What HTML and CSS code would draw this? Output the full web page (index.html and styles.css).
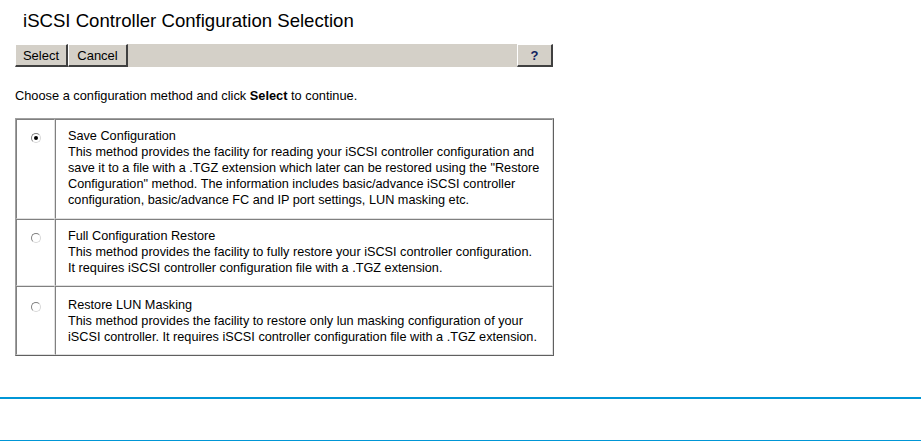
FILE: index.html
```html
<!DOCTYPE html>
<html>
<head>
<meta charset="utf-8">
<link rel="stylesheet" href="styles.css">
</head>
<body>
<div class="page">
  <h1 class="title">iSCSI Controller Configuration Selection</h1>
  <div class="toolbar">
    <span class="btn">Select</span>
    <span class="btn">Cancel</span>
    <span class="spacer"></span>
    <span class="btn help">?</span>
  </div>
  <p class="intro">Choose a configuration method and click <b>Select</b> to continue.</p>
  <table class="options">
    <tr class="row1">
      <td class="sel"><span class="radio checked"></span></td>
      <td class="desc">Save Configuration<br>This method provides the facility for reading your iSCSI controller configuration and save it to a file with a .TGZ extension which later can be restored using the "Restore Configuration" method. The information includes basic/advance iSCSI controller configuration, basic/advance FC and IP port settings, LUN masking etc.</td>
    </tr>
    <tr class="row2">
      <td class="sel"><span class="radio"></span></td>
      <td class="desc">Full Configuration Restore<br>This method provides the facility to fully restore your iSCSI controller configuration.<br>It requires iSCSI controller configuration file with a .TGZ extension.</td>
    </tr>
    <tr class="row3">
      <td class="sel"><span class="radio"></span></td>
      <td class="desc">Restore LUN Masking<br>This method provides the facility to restore only lun masking configuration of your iSCSI controller. It requires iSCSI controller configuration file with a .TGZ extension.</td>
    </tr>
  </table>
</div>
<div class="rule rule1"></div>
<div class="rule rule2"></div>
</body>
</html>
```
FILE: styles.css
```css
html, body {
  margin: 0;
  padding: 0;
  background: #fff;
  font-family: "Liberation Sans", Arial, sans-serif;
  color: #000;
}
.page {
  padding-left: 15px;
  width: 538px;
}
.title {
  font-size: 18.6px;
  font-weight: normal;
  margin: 0;
  padding: 11px 0 0 8px;
  height: 44px;
  line-height: 20px;
  box-sizing: border-box;
}
.toolbar {
  display: flex;
  height: 23px;
  background: #d4d0c8;
}
.btn {
  display: flex;
  align-items: center;
  justify-content: center;
  font-size: 13px;
  box-sizing: border-box;
  height: 23px;
  border-top: 1px solid #fff;
  border-left: 1px solid #fff;
  border-right: 2px solid #404040;
  border-bottom: 2px solid #404040;
  background: #d4d0c8;
}
.btn:nth-child(1) { width: 53px; }
.btn:nth-child(2) { width: 60px; }
.spacer { flex: 1; }
.help { width: 36px; font-weight: bold; color: #102060; }
.intro {
  font-size: 12.8px;
  margin: 0;
  padding-top: 21px;
  height: 51px;
  box-sizing: border-box;
  line-height: 16px;
}
.options {
  width: 539px;
  border-collapse: separate;
  border-spacing: 0;
  border-top: 1px solid #a0a0a0;
  border-left: 1px solid #a0a0a0;
  border-right: 1px solid #606060;
  border-bottom: 1px solid #606060;
  font-size: 12.7px;
}
.options td {
  border-top: 1px solid #808080;
  border-left: 1px solid #808080;
  border-right: 1px solid #e0e0e0;
  border-bottom: 1px solid #e0e0e0;
  vertical-align: top;
  line-height: 16px;
}
.sel {
  width: 39px;
  padding: 0;
  text-align: center;
}
.desc {
  padding: 8px 8px 0 12px;
}
.row1 td { height: 100px; box-sizing: border-box; }
.row2 td { height: 67px; box-sizing: border-box; }
.row3 td { height: 69px; box-sizing: border-box; }
.row3 .desc { padding-top: 10px; }
.radio {
  display: inline-block;
  width: 8px;
  height: 8px;
  border-radius: 50%;
  border: 1px solid #808080;
  border-right-color: #d8d8d8;
  border-bottom-color: #d8d8d8;
  margin-top: 13px;
  position: relative;
  background: #fff;
}
.row3 .radio { margin-top: 15px; }
.radio.checked::after {
  content: "";
  position: absolute;
  left: 2px;
  top: 2px;
  width: 4px;
  height: 4px;
  border-radius: 50%;
  background: #000;
}
.rule {
  height: 2px;
  background: #0096d6;
}
.rule1 { margin-top: 41px; }
.rule2 { margin-top: 41px; }
```
